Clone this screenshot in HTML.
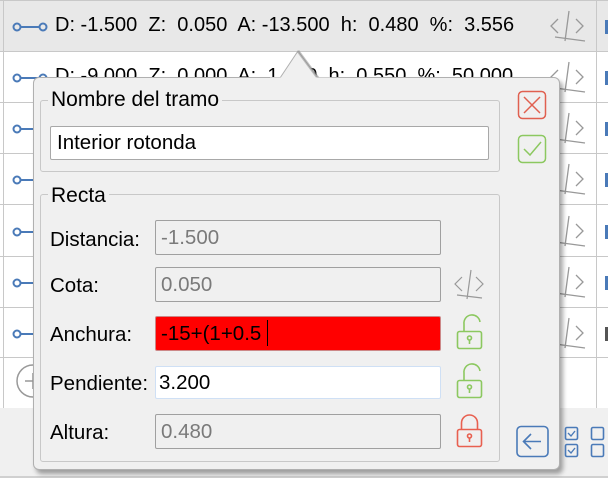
<!DOCTYPE html>
<html><head><meta charset="utf-8"><style>
*{box-sizing:border-box;margin:0;padding:0}
body{width:608px;height:478px;overflow:hidden;background:#fff;font-family:"Liberation Sans",sans-serif;font-size:20px;color:#000;position:relative}
.abs{position:absolute}
.row{position:absolute;left:0;width:608px;border-bottom:1px solid #c8c8c8}
.txt{position:absolute;left:55px;white-space:pre;font-size:20px}
.vl{position:absolute;top:0;width:1px;height:408px;background:#c8c8c8}
.lbl{position:absolute;left:50px;font-size:20.5px}
.inp{position:absolute;left:155px;width:286px;height:35px;border:1px solid #a0a0a0;border-radius:2px;background:#f0f0f0;color:#7a7a7a;font-size:20.5px;line-height:33px;padding-left:5px}
</style></head><body>
<div class="row" style="top:0;height:52px;background:#e8e8e8;border-top:1px solid #c8c8c8"></div>
<div class="row" style="top:52px;height:51px"></div>
<div class="row" style="top:103px;height:51px"></div>
<div class="row" style="top:154px;height:51px"></div>
<div class="row" style="top:205px;height:52px"></div>
<div class="row" style="top:257px;height:51px"></div>
<div class="row" style="top:308px;height:50px"></div>
<div class="vl" style="left:3px"></div>
<div class="vl" style="left:596px"></div>
<div class="abs" style="left:0;top:408px;width:608px;height:70px;background:#f0f0f0;border-bottom:2px solid #d0d0d0"></div>
<div class="txt" style="top:14px">D: -1.500  Z:  0.050  A: -13.500  h:  0.480  %:  3.556</div>
<div class="txt" style="top:65px">D: -9.000  Z:  0.000  A:  1.000  h:  0.550  %:  50.000</div>
<svg class="abs" style="left:0;top:0" width="608" height="408">
<g stroke="#4a7ab8" stroke-width="2" fill="none">
<g id="lk"><circle cx="17" cy="27" r="3.5"/><circle cx="43" cy="27" r="3.5"/><line x1="20.5" y1="27" x2="39.5" y2="27"/></g>
<use href="#lk" y="51"/><use href="#lk" y="102"/><use href="#lk" y="153"/><use href="#lk" y="205"/><use href="#lk" y="256"/><use href="#lk" y="307"/>
</g>
<g stroke="#999" stroke-width="1.3" fill="none">
<g id="cd"><path d="M558 19 L551 26 L558 33 M576 19 L583 26 L576 33 M569 11 L565 41 M555 37 L585 41"/></g>
<use href="#cd" y="51"/><use href="#cd" y="102"/><use href="#cd" y="153"/><use href="#cd" y="205"/><use href="#cd" y="256"/><use href="#cd" y="307"/>
</g>
<g fill="#4a7ab8"><rect x="605" y="20" width="3" height="14"/><rect x="605" y="71" width="3" height="14"/><rect x="605" y="122" width="3" height="14"/><rect x="605" y="173" width="3" height="14"/><rect x="605" y="225" width="3" height="14"/><rect x="605" y="276" width="3" height="14"/><rect x="605" y="327" width="3" height="14" fill="#555"/></g>
<circle cx="33" cy="381" r="16" fill="none" stroke="#999" stroke-width="1.5"/><path d="M25 381 H41 M33 373 V389" stroke="#999" stroke-width="1.5"/>
</svg>
<div class="abs" style="left:33px;top:77px;width:527px;height:393px;background:#f0f0f0;border:1px solid #b0b0b0;border-radius:6px;box-shadow:3px 4px 5px rgba(0,0,0,.35)"></div>
<svg class="abs" style="left:270px;top:50px" width="60" height="30">
<path d="M10 28 L28 1 L48 28" fill="#f0f0f0" stroke="#b0b0b0" stroke-width="1"/>
<path d="M28 1 L48 28" stroke="#888" stroke-width="3" opacity=".5"/>
<rect x="0" y="27.5" width="60" height="3" fill="#f0f0f0"/>
</svg>
<div class="abs" style="left:40px;top:100px;width:460px;height:72px;border:1px solid #c8c8c8;border-radius:3px"></div>
<div class="abs" style="left:48px;top:88px;background:#f0f0f0;padding:0 3px;font-size:21px">Nombre del tramo</div>
<div class="abs" style="left:50px;top:126px;width:439px;height:34px;background:#fff;border:1px solid #a8a8a8;border-radius:2px;padding-left:6px;line-height:32px;font-size:20.5px">Interior rotonda</div>
<div class="abs" style="left:40px;top:194px;width:460px;height:268px;border:1px solid #c8c8c8;border-radius:3px"></div>
<div class="abs" style="left:48px;top:184px;background:#f0f0f0;padding:0 3px;font-size:21px">Recta</div>
<div class="lbl" style="top:228px">Distancia:</div>
<div class="inp" style="top:220px">-1.500</div>
<div class="lbl" style="top:274px">Cota:</div>
<div class="inp" style="top:267px">0.050</div>
<div class="lbl" style="top:323px">Anchura:</div>
<div class="inp" style="top:316px;background:#f00;color:#000;border-color:#c88">-15+(1+0.5<span style="display:inline-block;width:1px;height:26px;background:#000;margin-left:6px;vertical-align:-6px"></span></div>
<div class="lbl" style="top:372px">Pendiente:</div>
<div class="inp" style="top:366px;height:33px;background:#fff;color:#000;border-color:#cfe0f5;line-height:31px;padding-left:3px">3.200</div>
<div class="lbl" style="top:421px">Altura:</div>
<div class="inp" style="top:414px">0.480</div>
<svg class="abs" style="left:0;top:0" width="608" height="478">
<rect x="518.5" y="91.5" width="27" height="27" rx="4" fill="none" stroke="#e06050" stroke-width="1.5"/>
<path d="M524 97 L540 113 M540 97 L524 113" stroke="#e06050" stroke-width="1.5"/>
<rect x="518.5" y="135.5" width="27" height="27" rx="4" fill="none" stroke="#8cc860" stroke-width="1.5"/>
<path d="M524 149 L530 155 L541 142" stroke="#8cc860" stroke-width="1.5" fill="none"/>
<path d="M462 277 L455 284 L462 291 M476 277 L483 284 L476 291 M471 270 L467 299 M457 295 L482 298" stroke="#999" stroke-width="1.2" fill="none"/>
<g fill="none" stroke-width="1.6">
<g stroke="#8cc860"><path d="M464 331 V324 a8 8 0 0 1 16 -2"/><rect x="457.5" y="331.5" width="24" height="17" rx="2"/><circle cx="469.5" cy="338" r="2"/><path d="M469.5 340 V344"/></g>
<g stroke="#8cc860"><path d="M464 380 V373 a8 8 0 0 1 16 -2"/><rect x="457.5" y="380.5" width="24" height="17" rx="2"/><circle cx="469.5" cy="387" r="2"/><path d="M469.5 389 V393"/></g>
<g stroke="#e86050"><path d="M461.5 429 V423 a8 8 0 0 1 16 0 V429"/><rect x="457.5" y="429.5" width="24" height="17" rx="2"/><circle cx="469.5" cy="436" r="2"/><path d="M469.5 438 V442"/></g>
</g>
<rect x="517" y="426.5" width="31" height="30" rx="4" fill="none" stroke="#4a7ab8" stroke-width="1.6"/>
<path d="M541 441.5 H524 M531 434 L523.5 441.5 L531 449" stroke="#4a7ab8" stroke-width="1.6" fill="none"/>
<g fill="none" stroke="#4a7ab8" stroke-width="1.6">
<rect x="565.5" y="427.5" width="12" height="12" rx="1.5"/><rect x="565.5" y="444.5" width="12" height="12" rx="1.5"/>
<rect x="591.5" y="427.5" width="12" height="12" rx="1.5"/><rect x="591.5" y="444.5" width="12" height="12" rx="1.5"/>
<path d="M568 433 L571 436 L575 431 M568 450 L571 453 L575 448" stroke-width="1.4"/>
</g>
</svg>
</body></html>
